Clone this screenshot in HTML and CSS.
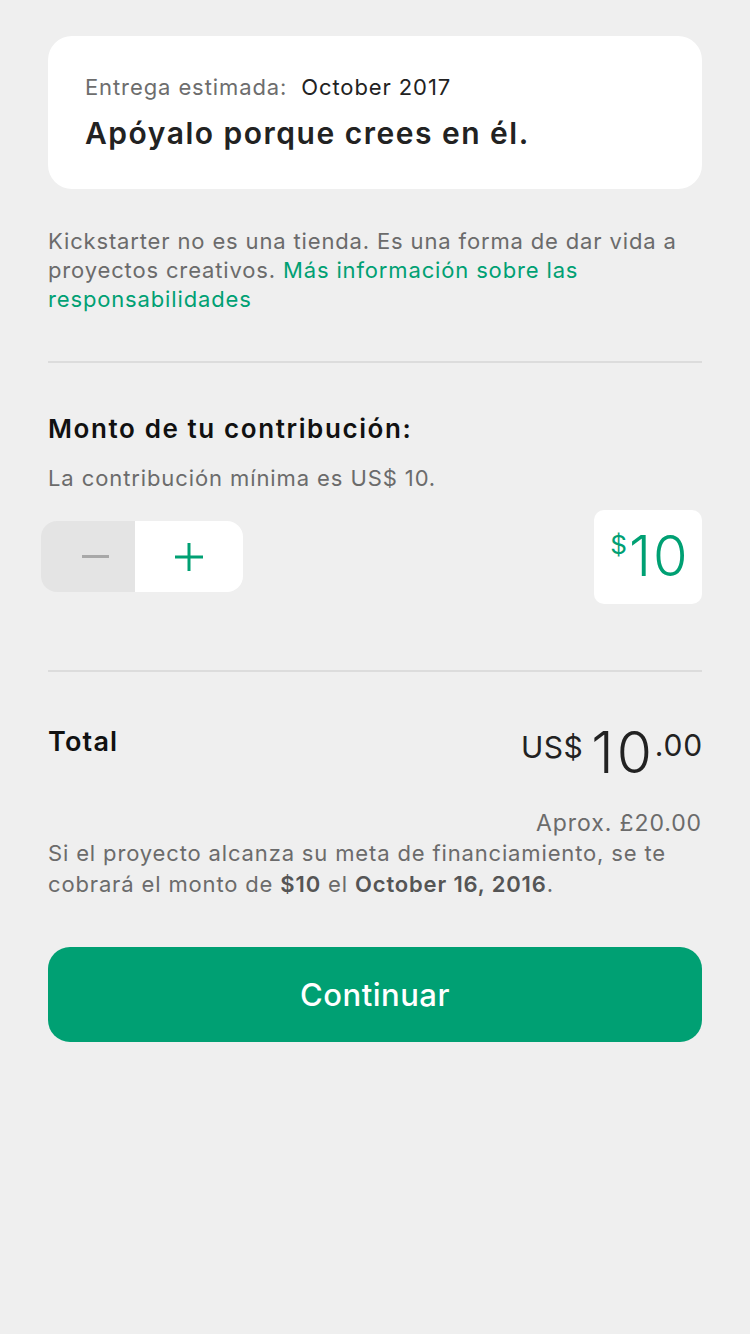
FILE: index.html
```html
<!DOCTYPE html>
<html lang="es">
<head>
<meta charset="utf-8">
<link rel="stylesheet" href="styles.css">
</head>
<body>
<main class="page">
  <section class="card">
    <div class="delivery"><span class="delivery-label">Entrega estimada:</span><span class="delivery-date">October 2017</span></div>
    <h1 class="card-title">Apóyalo porque crees en él.</h1>
  </section>

  <p class="note">Kickstarter no es una tienda. Es una forma de dar vida a proyectos creativos. <a class="link" href="#">Más información sobre las responsabilidades</a></p>

  <hr class="divider divider-first">

  <section class="pledge">
    <h2 class="section-title">Monto de tu contribución:</h2>
    <p class="minimum">La contribución mínima es US$ 10.</p>
    <div class="pledge-row">
      <div class="stepper">
        <button class="step step-minus" type="button" aria-label="Menos"><span class="minus-bar"></span></button>
        <button class="step step-plus" type="button" aria-label="Más">
          <svg width="28" height="28" viewBox="0 0 28 28"><path d="M14 0v28M0 14h28" stroke="#00a073" stroke-width="3" fill="none"/></svg>
        </button>
      </div>
      <div class="amount-box"><span class="amount-sign">$</span><span class="amount-value">10</span></div>
    </div>
  </section>

  <hr class="divider divider-second">

  <section class="total">
    <div class="total-row">
      <h2 class="total-label">Total</h2>
      <div class="total-amount"><span class="cur">US$</span><span class="big">10</span><span class="cents">.00</span></div>
    </div>
    <p class="approx">Aprox. £20.00</p>
    <p class="charge">Si el proyecto alcanza su meta de financiamiento, se te cobrará el monto de <b>$10</b> el <b>October 16, 2016</b>.</p>
  </section>

  <button class="continue" type="button">Continuar</button>
</main>
</body>
</html>
```

FILE: styles.css
```css
* { box-sizing: border-box; }
html, body { margin: 0; padding: 0; }
body {
  background: #efefef;
  font-family: Inter, "Noto Sans", "Liberation Sans", sans-serif;
  color: #222;
  width: 750px;
  min-height: 1334px;
}
.page {
  padding: 36px 48px 0 48px;
  display: flex;
  flex-direction: column;
}
.card {
  background: #fff;
  border-radius: 24px;
  height: 153px;
  padding: 34px 37px 0 37px;
}
.delivery {
  font-size: 22px;
  line-height: 34px;
  letter-spacing: 0.9px;
  display: flex;
  gap: 14px;
}
.delivery-label { color: #6d6d6d; }
.delivery-date { color: #222; }
.card-title {
  margin: 9px 0 0 0;
  font-size: 30px;
  line-height: 40px;
  font-weight: 600;
  color: #222;
  letter-spacing: 1.5px;
}
.note {
  margin: 38px 0 0 0;
  font-size: 22px;
  line-height: 29px;
  letter-spacing: 0.85px;
  color: #6b6b6b;
}
.link { color: #00a073; text-decoration: none; }
.divider {
  border: 0;
  height: 2px;
  background: #dcdcdc;
  margin: 0;
}
.divider-first { margin-top: 47px; }
.section-title {
  margin: 46px 0 0 0;
  font-size: 26px;
  line-height: 40px;
  font-weight: 600;
  letter-spacing: 1.6px;
  color: #111;
}
.minimum {
  margin: 14px 0 0 0;
  font-size: 22px;
  line-height: 30px;
  letter-spacing: 0.9px;
  color: #6b6b6b;
}
.pledge-row {
  margin-top: 17px;
  display: flex;
  justify-content: space-between;
  align-items: flex-start;
}
.stepper {
  margin-top: 11px;
  margin-left: -7px;
  display: flex;
  height: 71px;
  border-radius: 16px;
  overflow: hidden;
}
.step {
  border: 0;
  padding: 0;
  margin: 0;
  height: 71px;
  display: flex;
  align-items: center;
  justify-content: center;
  cursor: pointer;
}
.step-minus { width: 94px; background: #e4e4e4; padding-left: 14px; }
.step-plus { width: 108px; background: #fff; }
.minus-bar { display: block; width: 27px; height: 3px; background: #a8a8a8; }
.amount-box {
  width: 108px;
  height: 94px;
  background: #fff;
  border-radius: 10px;
  display: flex;
  align-items: flex-start;
  justify-content: center;
  padding-top: 15px;
  padding-left: 2px;
  color: #00a073;
}
.amount-sign { font-size: 26px; line-height: 30px; margin-top: 5px; margin-right: 2px; }
.amount-value { font-size: 56px; line-height: 62px; font-weight: 300; letter-spacing: 2px; margin-right: -2px; }
.divider-second { margin-top: 66px; }
.total-row {
  margin-top: 50px;
  display: flex;
  justify-content: space-between;
  align-items: flex-start;
}
.total-label {
  margin: 0;
  font-size: 27px;
  line-height: 40px;
  font-weight: 600;
  letter-spacing: 1.2px;
  color: #111;
}
.total-amount {
  display: flex;
  align-items: flex-start;
  color: #222;
  margin-top: -4px;
}
.cur { font-size: 30px; line-height: 36px; margin-top: 11px; margin-right: 8px; letter-spacing: 0.5px; }
.big { font-size: 57px; line-height: 70px; font-weight: 300; letter-spacing: 3px; }
.cents { font-size: 30px; line-height: 36px; margin-top: 9px; letter-spacing: 0.8px; margin-right: -1px; }
.approx {
  margin: 20px 0 0 0;
  text-align: right;
  font-size: 23px;
  line-height: 30px;
  letter-spacing: 0.9px;
  color: #6b6b6b;
}
.charge {
  margin: 0;
  font-size: 22px;
  line-height: 31px;
  letter-spacing: 0.85px;
  color: #6b6b6b;
}
.charge b { font-weight: 600; color: #555; }
.continue {
  margin-top: 47px;
  height: 95px;
  border: 0;
  border-radius: 22px;
  background: #00a073;
  color: #fff;
  font-family: inherit;
  font-size: 31px;
  font-weight: 500;
  letter-spacing: 0.5px;
  cursor: pointer;
}
```
